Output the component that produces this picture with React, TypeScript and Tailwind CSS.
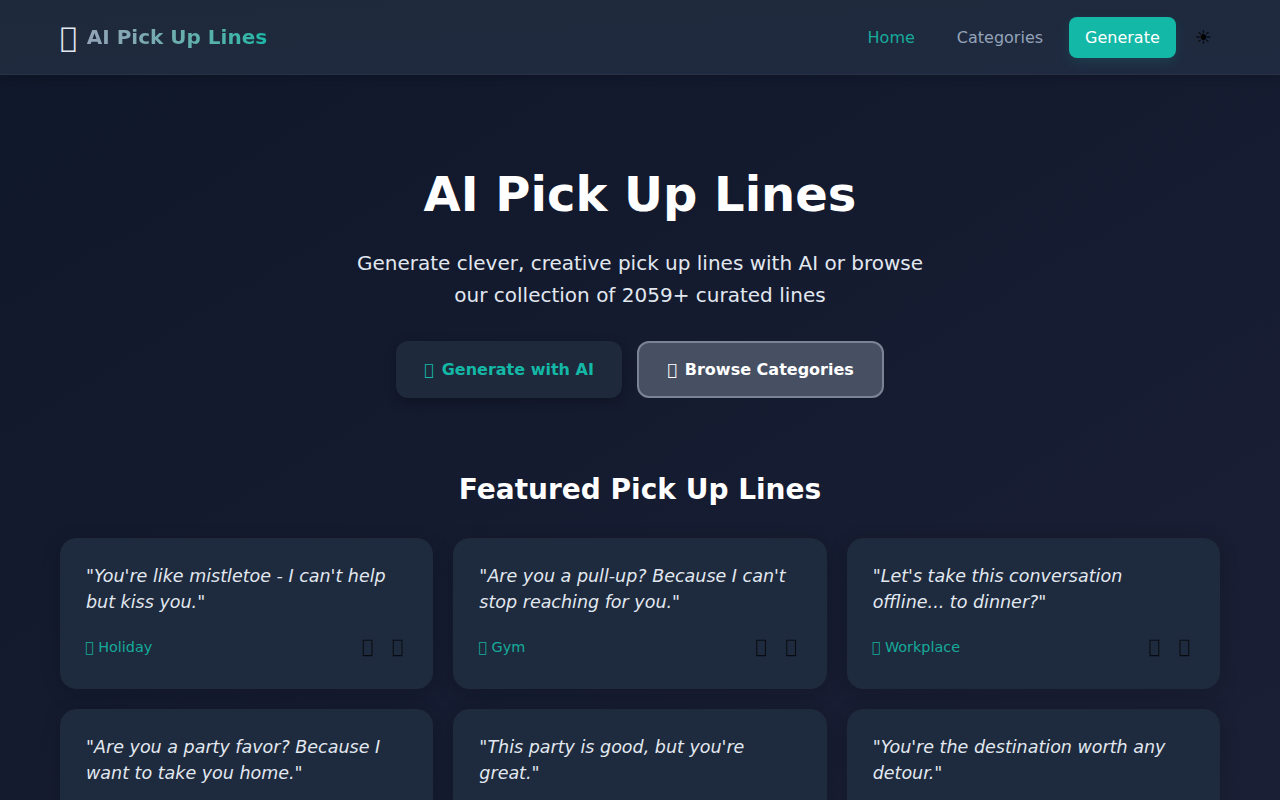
import React from "react";

const font = { fontFamily: '"DejaVu Sans", sans-serif' };
const T = "\uE000";

const cards = [
  ['"You\'re like mistletoe - I can\'t help but kiss you."', "Holiday"],
  ['"Are you a pull-up? Because I can\'t stop reaching for you."', "Gym"],
  ['"Let\'s take this conversation offline... to dinner?"', "Workplace"],
  ['"Are you a party favor? Because I want to take you home."', "Party"],
  ['"This party is good, but you\'re great."', "Party"],
  ['"You\'re the destination worth any detour."', "Travel"],
];

function Card({ text, tag }: { text: string; tag: string }) {
  return (
    <div className="h-[151px] rounded-2xl bg-[#1e2a3d] px-[25px] pt-[24px] shadow-[0_4px_20px_rgba(0,0,0,0.15)] border border-[#1f2a3d]">
      <p className="text-[17.5px] leading-[26.4px] italic text-[#e2e8f0] mb-[17px]">{text}</p>
      <div className="flex items-center justify-between">
        <span className="-ml-[1px] pt-[2px] text-[14.4px] text-[#16ab9b]">{T} {tag}</span>
        <div className="flex items-center gap-[10.5px]">
          <span className="px-[4px] text-[19.2px] text-black opacity-70">{T}</span>
          <span className="px-[4px] text-[19.2px] text-black opacity-70">{T}</span>
        </div>
      </div>
    </div>
  );
}

export default function App() {
  return (
    <div style={font} className="h-[800px] overflow-hidden bg-gradient-to-br from-[#0f172a] to-[#1a1f35] text-white">
      <header className="h-[75px] pt-[1px] bg-gradient-to-br from-[#1e293b] to-[#1f2a40] border-b border-[#263246] shadow-[0_2px_10px_rgba(0,0,0,0.2)] px-[60px] flex items-center justify-between">
        <div className="flex items-center gap-[10px]">
          <span className="text-[28px] text-[#e2e8f0] leading-none">{T}</span>
          <span className="pb-[2px] text-[20px] font-bold bg-gradient-to-r from-[#94a3b8] to-[#14b8a6] bg-clip-text text-transparent">AI Pick Up Lines</span>
        </div>
        <nav className="flex items-center gap-[10px] text-[16px] pr-[8px]">
          <a className="px-[16px] py-[10px] text-[#16ab9b]">Home</a>
          <a className="px-[16px] py-[10px] text-[#94a3b8]">Categories</a>
          <a className="px-[16px] h-[41px] flex items-center rounded-lg bg-[#14b8a6] text-white shadow-[0_4px_12px_rgba(20,184,166,0.15)]">Generate</a>
          <span className="ml-[9px] pt-[1px] text-[19.2px] text-black">☀</span>
        </nav>
      </header>
      <main className="px-[60px]">
        <section className="pt-[90px] flex flex-col items-center">
          <h1 className="text-[48px] leading-[58px] font-bold text-white">AI Pick Up Lines</h1>
          <p className="mt-[24px] w-[600px] text-center text-[20px] leading-[32px] text-[#e2e8f0]">
            Generate clever, creative pick up lines with AI or browse our collection of 2059+ curated lines
          </p>
          <div className="mt-[30px] flex gap-[15px]">
            <a className="h-[57px] w-[226px] flex items-center justify-center gap-2 rounded-xl bg-[#1e293b] text-[#14b8a6] font-bold text-[16px] shadow-[0_4px_12px_rgba(0,0,0,0.25)]"><span>{T}</span><span>Generate with AI</span></a>
            <a className="h-[57px] w-[247px] flex items-center justify-center gap-2 rounded-xl bg-[#475063] border-2 border-[#7b8496] text-white font-bold text-[16px]"><span>{T}</span><span>Browse Categories</span></a>
          </div>
        </section>
        <h2 className="mt-[73px] text-center text-[28px] leading-[38px] font-bold">Featured Pick Up Lines</h2>
        <div className="mt-[29px] grid grid-cols-3 gap-x-[20px] gap-y-[20px]">
          {cards.map(([t, g], i) => (
            <Card key={i} text={t} tag={g} />
          ))}
        </div>
      </main>
    </div>
  );
}
